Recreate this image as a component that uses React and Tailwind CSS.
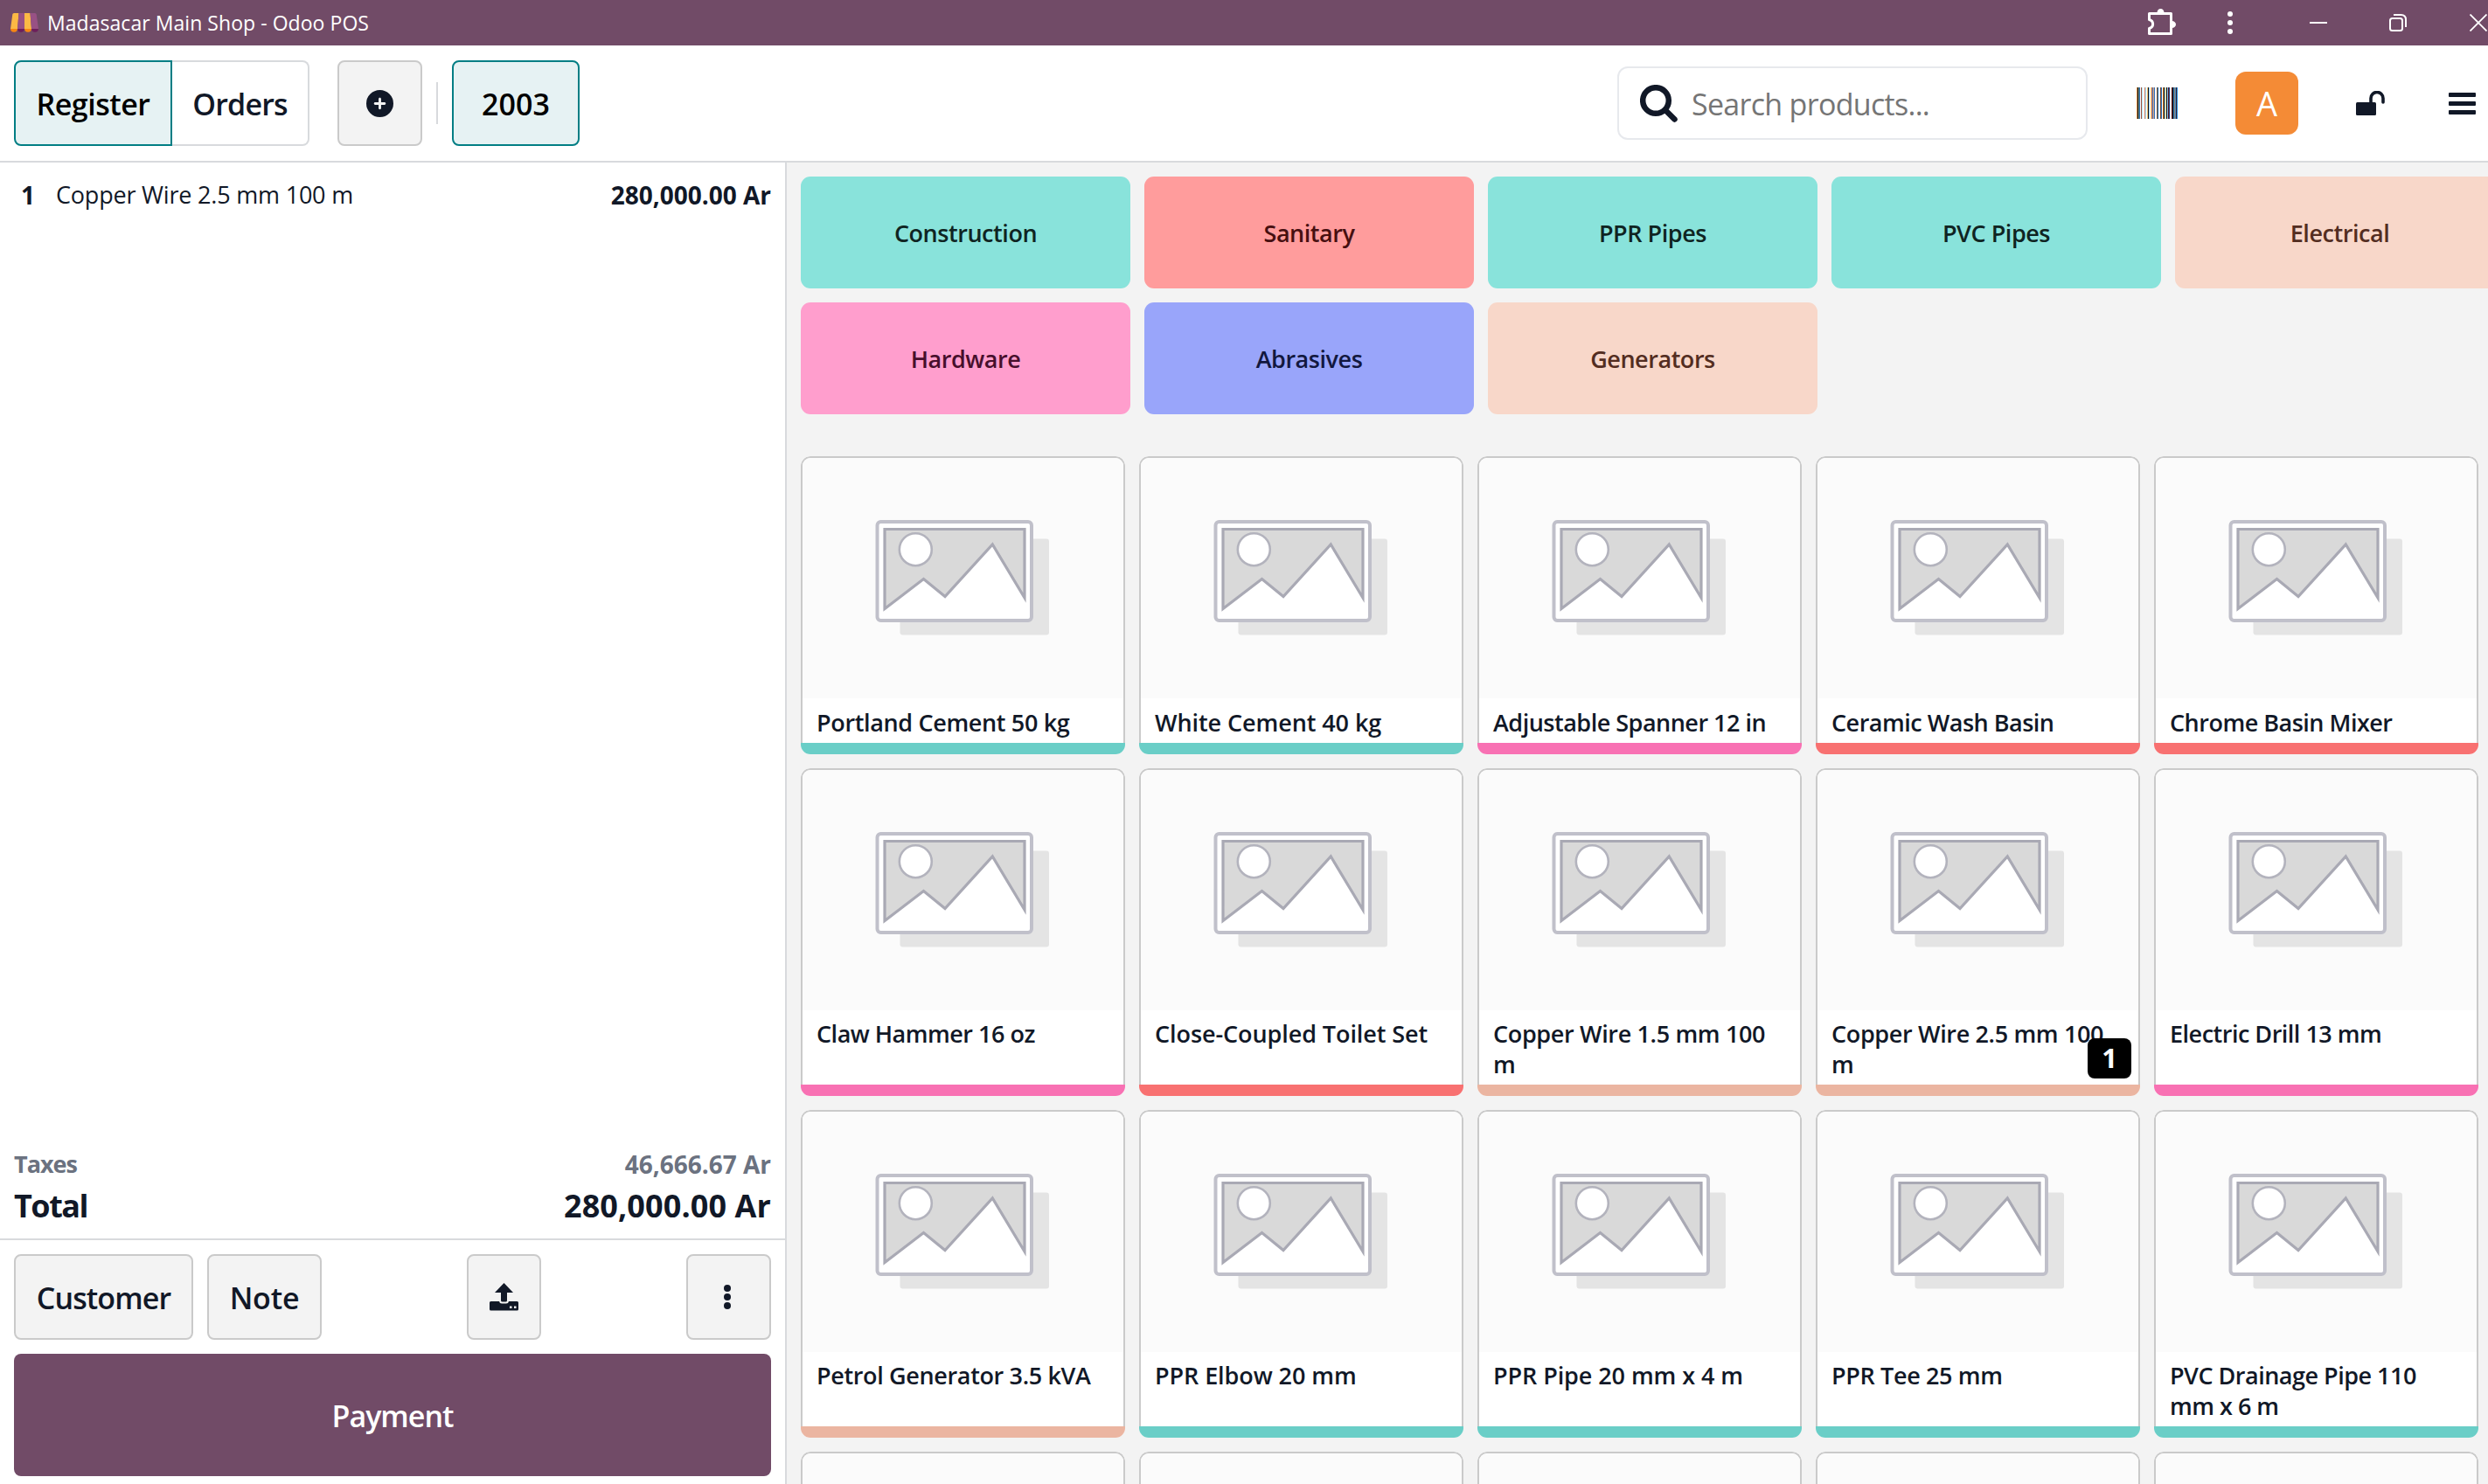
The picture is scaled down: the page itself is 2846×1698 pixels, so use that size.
import { FaCirclePlus } from "react-icons/fa6"

const categories = [
    { name: "Construction", style: "bg-[#89e3db] text-[#0f2422]" },
    { name: "Sanitary", style: "bg-[#ff9c9c] text-[#470f10]" },
    { name: "PPR Pipes", style: "bg-[#89e3db] text-[#0f2422]" },
    { name: "PVC Pipes", style: "bg-[#89e3db] text-[#0f2422]" },
    { name: "Electrical", style: "bg-[#f8d7c9] text-[#532d21]" },
    { name: "Hardware", style: "bg-[#ff9ecd] text-[#470f2c]" },
    { name: "Abrasives", style: "bg-[#99a5fa] text-[#12183f]" },
    { name: "Generators", style: "bg-[#f8d7c9] text-[#532d21]" },
]

const TEAL = "bg-[#6acec7]"
const PINK = "bg-[#f871b3]"
const RED = "bg-[#f87171]"
const PEACH = "bg-[#ebb5a1]"

const TIGHT = "tracking-[-0.500px]"
const SNUG = "tracking-[-0.350px]"
const LOOSE = "tracking-[-0.080px]"

const products = [
    { name: "Portland Cement 50 kg", color: TEAL, tracking: SNUG },
    { name: "White Cement 40 kg", color: TEAL, tracking: LOOSE },
    { name: "Adjustable Spanner 12 in", color: PINK, tracking: TIGHT },
    { name: "Ceramic Wash Basin", color: RED, tracking: TIGHT },
    { name: "Chrome Basin Mixer", color: RED, tracking: TIGHT },
    { name: "Claw Hammer 16 oz", color: PINK, tracking: TIGHT },
    { name: "Close-Coupled Toilet Set", color: RED, tracking: LOOSE },
    { name: "Copper Wire 1.5 mm 100 m", color: PEACH, tracking: SNUG },
    { name: "Copper Wire 2.5 mm 100 m", color: PEACH, tracking: SNUG, qty: 1 },
    { name: "Electric Drill 13 mm", color: PINK, tracking: TIGHT },
    { name: "Petrol Generator 3.5 kVA", color: PEACH, tracking: SNUG },
    { name: "PPR Elbow 20 mm", color: TEAL, tracking: LOOSE },
    { name: "PPR Pipe 20 mm x 4 m", color: TEAL, tracking: LOOSE },
    { name: "PPR Tee 25 mm", color: TEAL, tracking: SNUG },
    { name: "PVC Drainage Pipe 110 mm x 6 m", color: TEAL, tracking: TIGHT },
    // next row, only the top of the cards is in view
    { name: "", color: TEAL },
    { name: "", color: TEAL },
    { name: "", color: TEAL },
    { name: "", color: TEAL },
    { name: "", color: TEAL },
]

// one entry per 1px stripe: [x, color]
const stripes = [
    [0, "#e8923c"], [1, "#0b1020"], [2, "#6f8f78"], [3, "#2563b0"], [5, "#a0523c"], [6, "#b5e8fa"],
    [9, "#d0826a"], [10, "#a8e2f5"], [12, "#f5c878"], [13, "#0b1020"], [14, "#9fd4f5"], [16, "#f5d08c"],
    [17, "#c87860"], [18, "#4a78b8"], [19, "#d8a880"], [20, "#2f6fc0"], [23, "#8a5a30"], [24, "#1463a8"],
    [27, "#7a4a30"], [28, "#2468b0"], [30, "#d07820"], [31, "#0b1020"], [32, "#b8e4e0"], [33, "#f0d890"],
    [34, "#101828"], [35, "#8fc4e8"], [36, "#5a1820"], [37, "#1a3f80"], [40, "#5a1018"], [41, "#0b1020"],
    [42, "#2a70a8"], [43, "#8a8478"], [44, "#4a90c8"], [45, "#3a2030"], [46, "#1f86d8"],
]

function Barcode() {
    return (
        <svg viewBox="0 0 47 36" className="h-9 w-[47px] shrink-0" shapeRendering="crispEdges">
            {stripes.map(([x, color]) => (
                <rect key={x} x={x} y="0" width="1" height="36" fill={color} />
            ))}
        </svg>
    )
}

function Placeholder() {
    return (
        <svg viewBox="0 0 367 275" className="block h-[275px] w-full bg-[#fbfbfb]">
            <rect x="111.500" y="92.500" width="170.500" height="110" rx="3" fill="#e4e4e4" />
            <rect x="85.500" y="73" width="176.500" height="113" rx="4" fill="#fff" stroke="#c0c0ca" strokeWidth="4" />
            <path
                d="M94 81.500H254V160L217.300 99L163 158.500L138.500 138.500L94 172.500Z"
                fill="#d9d9d9"
                stroke="#a9a9b4"
                strokeWidth="3.200"
            />
            <circle cx="129.300" cy="104.700" r="18.500" fill="#fff" stroke="#b3b3bd" strokeWidth="2.600" />
        </svg>
    )
}

function ProductCard({ product }) {
    return (
        <div className="relative flex flex-col overflow-hidden rounded-[11px] bg-white">
            <div className="flex-1 overflow-hidden rounded-t-[11px] border-2 border-b-0 border-[#cacaca]">
                <Placeholder />
                <p className={`px-4 pt-[10.500px] pb-[6px] text-[27px] leading-[34.500px] font-semibold text-[#111827] ${product.tracking || ""}`}>
                    {product.name}
                </p>
            </div>
            <div className={`h-[12.500px] shrink-0 ${product.color}`} />
            {product.qty && (
                <span className="absolute right-[10px] bottom-5 flex h-[46px] w-[50px] items-center justify-center rounded-lg bg-black text-[31px] font-bold text-white">
                    {product.qty}
                </span>
            )}
        </div>
    )
}

function TitleBar() {
    return (
        <div className="flex h-[52px] shrink-0 items-center bg-[#714b67] text-white">
            <svg viewBox="0 0 32 22" className="ml-3 h-[22px] w-8">
                <path d="M0 17.500H8a4 4.200 0 0 1-8 0Z" fill="#f78613" />
                <path d="M8 17.500H16a4 4.200 0 0 1-8 0Z" fill="#6d1f5b" />
                <path d="M16 17.500H24a4 4.200 0 0 1-8 0Z" fill="#f78613" />
                <path d="M24 17.500H32a4 4.200 0 0 1-8 0Z" fill="#6d1f5b" />
                <path d="M4 0H9.500L8 18H0L2.300 1.500Q2.500 0 4 0Z" fill="#fbb945" />
                <path d="M9.500 0H16V18H8Z" fill="#985184" />
                <path d="M16 0H22.500L24 18H16Z" fill="#fbb945" />
                <path d="M22.500 0H28Q29.500 0 29.700 1.500L32 18H24Z" fill="#985184" />
            </svg>
            <span className="ml-[10px] text-[23px] tracking-[0.050px] whitespace-nowrap">Madasacar Main Shop - Odoo POS</span>
            <svg viewBox="0 0 32 32" className="ml-auto size-8 shrink-0">
                <path
                    d="M3.500 5.500H26.500V28.500H1.500V22.500C7 21 7 14 1.500 12.500V5.500Z"
                    fill="none"
                    stroke="#fff"
                    strokeWidth="3"
                    strokeLinejoin="round"
                />
                <path d="M10.500 4.500a4 4.500 0 0 1 8 0ZM27.500 14a4.500 4 0 0 1 0 8Z" fill="#fff" />
            </svg>
            <svg viewBox="0 0 6 26" className="ml-[59px] h-[26px] w-1.5 shrink-0" fill="#fff">
                <circle cx="3" cy="3" r="3" />
                <circle cx="3" cy="13" r="3" />
                <circle cx="3" cy="23" r="3" />
            </svg>
            <div className="ml-22 h-[2px] w-5 shrink-0 bg-white" />
            <svg viewBox="0 0 20 20" className="ml-[71px] size-5 shrink-0" fill="none" stroke="#fff" strokeWidth="2">
                <rect x="1" y="5" width="14" height="14" rx="2.500" />
                <path d="M5 1H13.500Q19 1 19 6.500V15" />
            </svg>
            <svg viewBox="0 0 20 20" className="mr-[1px] ml-[72px] size-5 shrink-0" stroke="#fff" strokeWidth="1.800">
                <path d="M0.500 0.500L19.500 19.500M19.500 0.500L0.500 19.500" />
            </svg>
        </div>
    )
}

function Header() {
    return (
        <header className="flex h-[134px] shrink-0 items-center border-b-2 border-[#d8dadd] bg-white pr-[14px] pl-4 text-[34px] font-semibold text-[#111827]">
            <div className="flex h-[98px] w-[338px]">
                <button className="w-[181px] rounded-l-lg border-2 border-[#017e84] bg-[#e6f2f3] pt-[2px] tracking-[-0.500px] text-black">
                    Register
                </button>
                <button className="flex-1 rounded-r-lg border-2 border-l-0 border-[#d8dadd] pt-[2px] tracking-[-0.800px]">Orders</button>
            </div>
            <button className="ml-8 flex h-[98px] w-[97px] items-center justify-center rounded-lg border-2 border-[#cacaca] bg-[#f3f3f3]">
                <FaCirclePlus className="size-[31px]" />
            </button>
            <div className="mx-4 h-12 w-[2px] bg-[#d8dadd]" />
            <button className="h-[98px] w-[146px] rounded-lg border-2 border-[#017e84] bg-[#e6f2f3] pt-[2px] text-black">2003</button>
            <div className="ml-auto flex h-[84px] w-[538px] items-center rounded-xl border-2 border-[#e7e9ed] pl-6">
                <svg viewBox="0 0 43 43" className="size-[43px]" fill="none" stroke="#111827" strokeWidth="6.500" strokeLinecap="round">
                    <circle cx="18" cy="18" r="14.800" />
                    <path d="M29 29L39.500 39.500" />
                </svg>
                <span className="ml-4 pt-[2px] font-normal tracking-[-0.700px] text-[#757575]">Search products...</span>
            </div>
            <div className="ml-14">
                <Barcode />
            </div>
            <div className="ml-[66px] flex size-18 items-center justify-center rounded-xl bg-[#f48b36] text-[38px] font-normal text-white">
                A
            </div>
            <svg viewBox="0 0 33 28" className="ml-[66px] h-7 w-[33px]">
                <rect x="0" y="13" width="23" height="15" rx="1.500" fill="#111827" />
                <path d="M17 14V8.500a7 7 0 0 1 14 0V13" fill="none" stroke="#111827" strokeWidth="3.600" strokeLinecap="round" />
            </svg>
            <svg viewBox="0 0 31 25" className="ml-[73px] h-[25px] w-[31px]" fill="#111827">
                <rect width="31" height="5" rx="1" />
                <rect y="10" width="31" height="5" rx="1" />
                <rect y="20" width="31" height="5" rx="1" />
            </svg>
        </header>
    )
}

function OrderPanel() {
    return (
        <section className="flex w-[900px] shrink-0 flex-col border-r-2 border-[#d8dadd] bg-white text-[#111827]">
            <div className="flex px-4 pt-4 text-[28px] leading-[42px]">
                <span className="w-12 pl-2 font-bold">1</span>
                <span className="text-[27px] tracking-[-0.200px]">Copper Wire 2.5 mm 100 m</span>
                <span className="ml-auto font-bold">280,000.00 Ar</span>
            </div>
            <div className="mt-auto px-4">
                <div className="flex justify-between text-[28px] leading-[42px] font-bold text-[#6b7280]">
                    <span className="text-[27px] tracking-[-1px]">Taxes</span>
                    <span>46,666.67 Ar</span>
                </div>
                <div className="flex justify-between text-[36px] leading-[54px] font-bold">
                    <span className="tracking-[-1.500px]">Total</span>
                    <span className="tracking-[0.100px]">280,000.00 Ar</span>
                </div>
            </div>
            <div className="mt-[10px] flex flex-col gap-4 border-t-2 border-[#d8dadd] px-4 pt-4 pb-[9px] text-[34px] font-semibold">
                <div className="flex h-[98px]">
                    <button className="w-[205px] rounded-lg border-2 border-[#cacaca] bg-[#f3f3f3] pt-[2px] tracking-[-0.900px]">Customer</button>
                    <button className="ml-4 w-[131px] rounded-lg border-2 border-[#cacaca] bg-[#f3f3f3] pt-[2px] tracking-[-0.200px]">Note</button>
                    <button className="ml-auto flex w-[85px] items-center justify-center rounded-lg border-2 border-[#cacaca] bg-[#f3f3f3]">
                        <svg viewBox="0 0 33 32" className="h-8 w-[33px]" fill="#111827">
                            <path d="M16.500 0L27 11H20V20Q20 21.500 18.500 21.500H14.500Q13 21.500 13 20V11H6Z" />
                            <path d="M1.500 21H11Q11.500 23.500 14 23.500H19Q21.500 23.500 22 21H31.500Q33 21 33 22.500V30Q33 31.500 31.500 31.500H1.500Q0 31.500 0 30V22.500Q0 21 1.500 21Z" />
                            <path d="M23 26.500H25.500V29H23ZM28 26.500H30.500V29H28Z" fill="#f3f3f3" />
                        </svg>
                    </button>
                    <button className="ml-auto flex w-[97px] items-center justify-center rounded-lg border-2 border-[#cacaca] bg-[#f3f3f3]">
                        <svg viewBox="0 0 8 28" className="mr-[3px] h-7 w-2" fill="#111827">
                            <circle cx="4" cy="4" r="4" />
                            <circle cx="4" cy="14" r="4" />
                            <circle cx="4" cy="24" r="4" />
                        </svg>
                    </button>
                </div>
                <button className="h-[140px] rounded-lg bg-[#714b67] pt-[2px] tracking-[-1px] text-white">Payment</button>
            </div>
        </section>
    )
}

export default function App() {
    return (
        <div className="flex h-[1698px] w-[2846px] flex-col overflow-hidden bg-[#f3f3f3] font-['Open_Sans','Noto_Sans',sans-serif]">
            <TitleBar />
            <Header />
            <main className="flex min-h-0 flex-1">
                <OrderPanel />
                <section className="flex-1 overflow-hidden pt-4 pl-4">
                    <div className="grid w-[1949px] grid-cols-5 gap-4">
                        {categories.map((c) => (
                            <button
                                key={c.name}
                                className={`h-32 rounded-[11px] pt-[2px] text-[27px] font-semibold tracking-[-0.450px] ${c.style}`}
                            >
                                {c.name}
                            </button>
                        ))}
                    </div>
                    <div className="mt-12 grid w-[1919px] grid-cols-5 gap-4">
                        {products.map((p, i) => (
                            <ProductCard key={i} product={p} />
                        ))}
                    </div>
                </section>
            </main>
        </div>
    )
}
